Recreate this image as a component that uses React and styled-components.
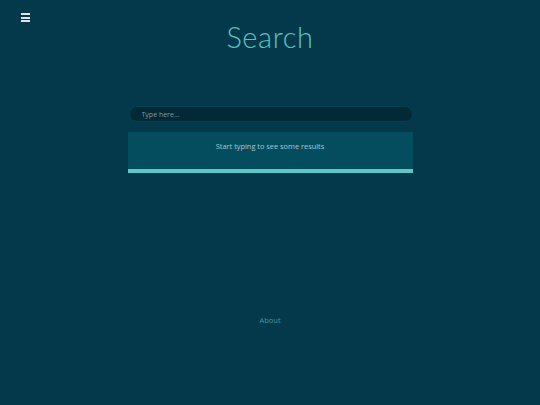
import styled, { createGlobalStyle } from "styled-components";

const GlobalStyle = createGlobalStyle`
  html, body {
    margin: 0;
    padding: 0;
    background: #03394a;
  }
  body {
    font-family: "Open Sans", "Liberation Sans", sans-serif;
  }
`;

const Page = styled.div`
  width: 540px;
  height: 405px;
  background: #03394a;
  display: flex;
  flex-direction: column;
  align-items: center;
  position: relative;
`;

const MenuButton = styled.button`
  position: absolute;
  top: 13px;
  left: 21px;
  width: 9px;
  height: 9px;
  padding: 0;
  border: none;
  background: transparent;
  display: flex;
  flex-direction: column;
  justify-content: space-between;
  cursor: pointer;
`;

const MenuLine = styled.span`
  display: block;
  height: 2px;
  background: #d8e4e8;
`;

const Title = styled.h1`
  margin: 20px 0 0;
  font-family: "Lato", "Open Sans", sans-serif;
  font-weight: 300;
  font-size: 29px;
  letter-spacing: 0.6px;
  color: #5ec3c0;
  line-height: 34px;
`;

const SearchArea = styled.div`
  width: 285px;
  margin-top: 52px;
  display: flex;
  flex-direction: column;
  gap: 10px;
`;

const Input = styled.input`
  box-sizing: border-box;
  width: 284px;
  height: 16px;
  margin-left: 1px;
  padding: 0 12px;
  border: 1px solid #073f4e;
  border-radius: 8px;
  background: #022a36;
  color: #cfe;
  font-family: "Open Sans", sans-serif;
  font-size: 7px;
  outline: none;
  &::placeholder {
    color: #7d9aa3;
  }
`;

const Results = styled.div`
  height: 28px;
  padding-top: 9px;
  background: #034d5f;
  border-bottom: 4px solid #5fc7c7;
  display: flex;
  justify-content: center;
`;

const Hint = styled.span`
  font-size: 7.4px;
  color: #a9c8cf;
  line-height: 11px;
`;

const Footer = styled.a`
  position: absolute;
  top: 315px;
  left: 0;
  right: 0;
  text-align: center;
  font-size: 7.5px;
  color: #3f9aa0;
  text-decoration: none;
`;

export default function App() {
  return (
    <Page>
      <GlobalStyle />
      <MenuButton aria-label="menu">
        <MenuLine />
        <MenuLine />
        <MenuLine />
      </MenuButton>
      <Title>Search</Title>
      <SearchArea>
        <Input placeholder="Type here..." />
        <Results>
          <Hint>Start typing to see some results</Hint>
        </Results>
      </SearchArea>
      <Footer href="#">About</Footer>
    </Page>
  );
}
